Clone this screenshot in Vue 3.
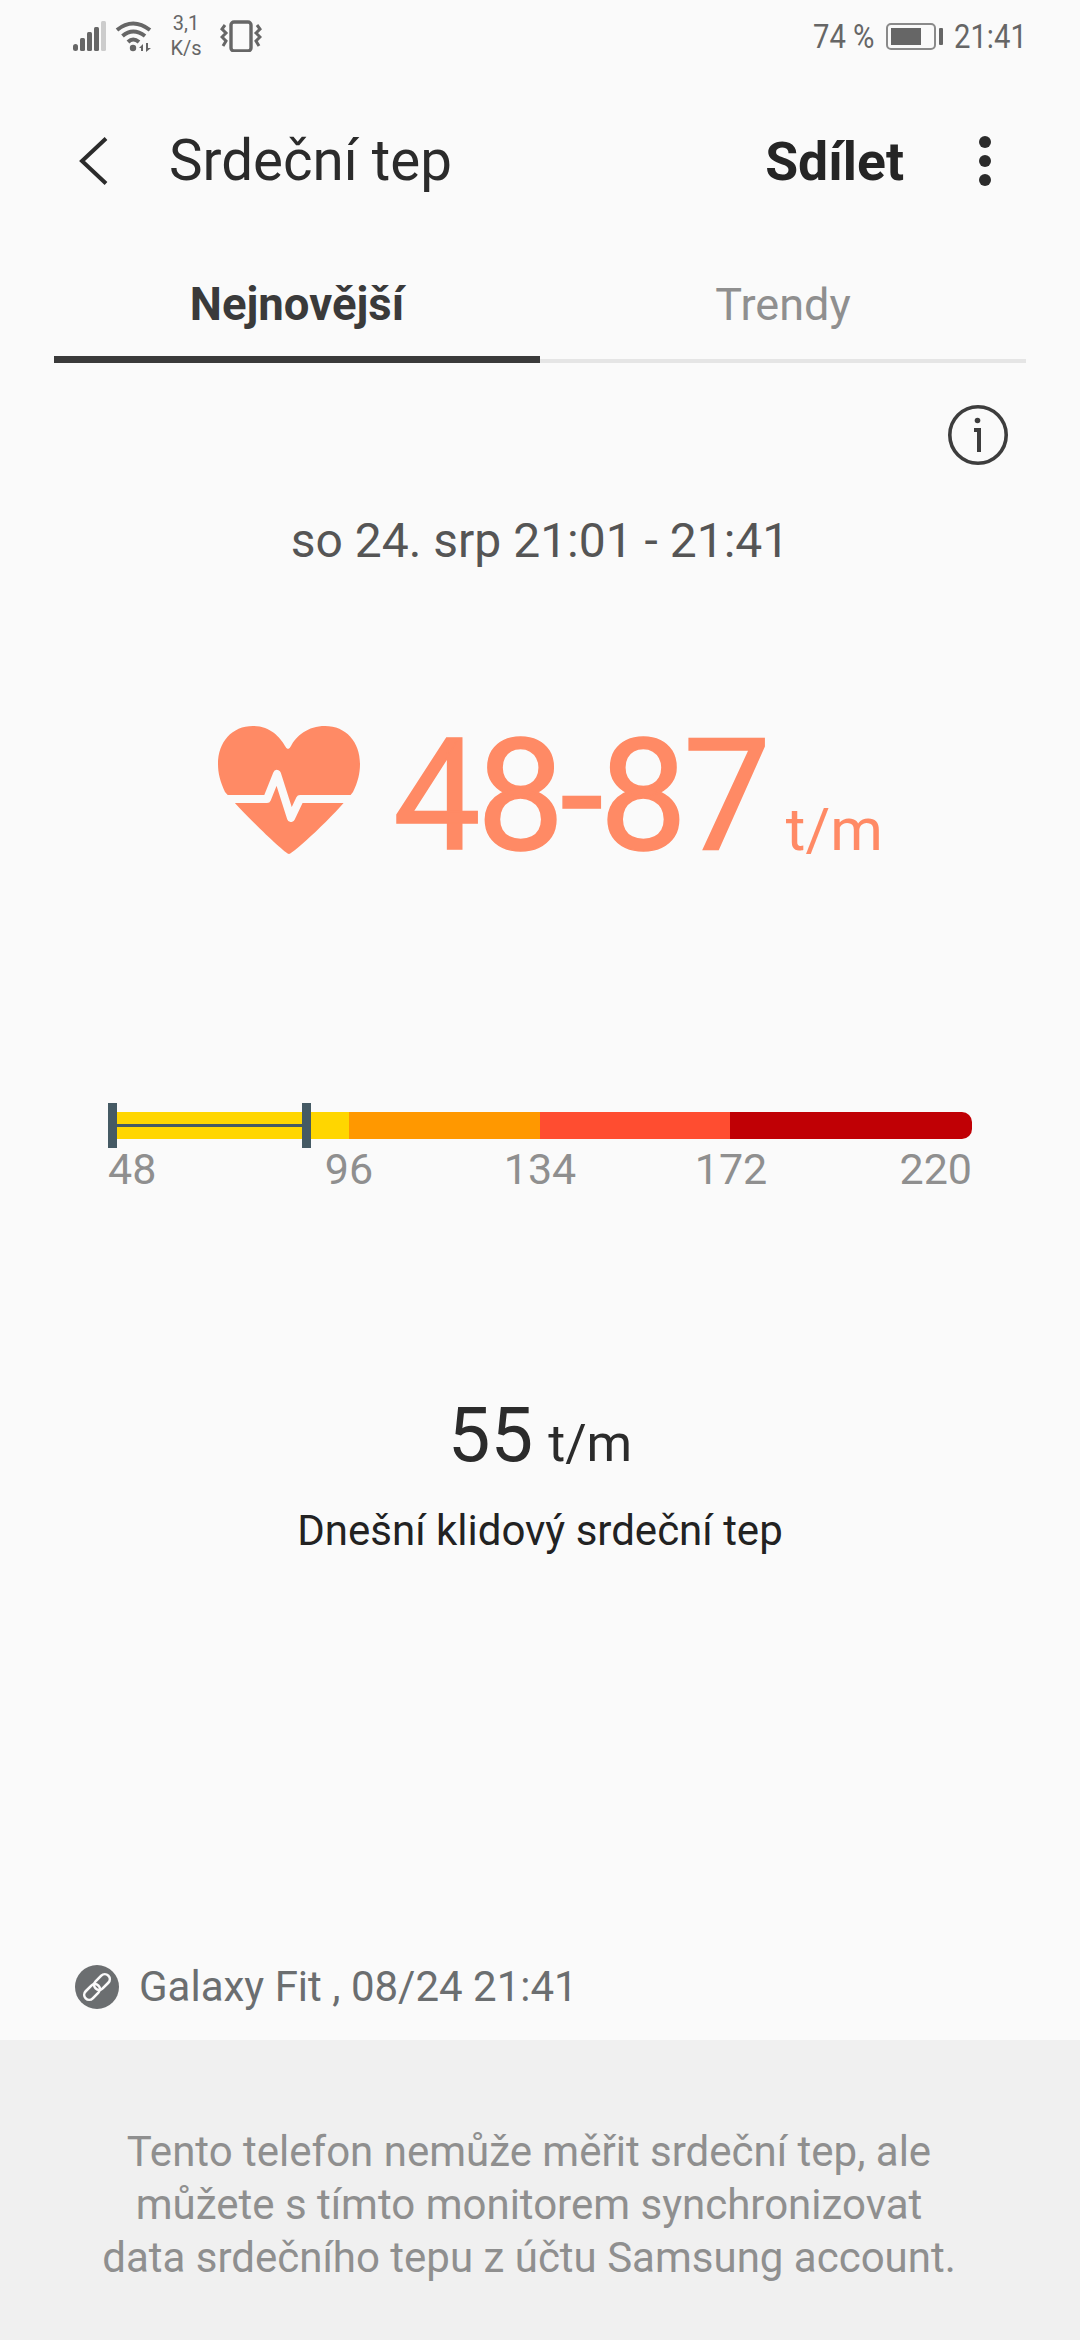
<template>
  <div class="screen">
    <div class="status-bar">
      <div class="status-left">
        <svg class="signal" width="34" height="32" viewBox="0 0 34 32">
          <rect x="0" y="24" width="5" height="7" rx="2.5" fill="#666" />
          <rect x="7" y="18" width="5" height="13" rx="1.5" fill="#666" />
          <rect x="14" y="12" width="5" height="19" rx="1.5" fill="#666" />
          <rect x="21" y="7" width="5" height="24" rx="1.5" fill="#666" />
          <rect x="28" y="1" width="5" height="30" rx="1.5" fill="#ccc" />
        </svg>
        <svg class="wifi" width="38" height="32" viewBox="0 0 38 32">
          <path d="M2 10 Q18 -3 35 10" fill="none" stroke="#666" stroke-width="4" />
          <path d="M7.5 16 Q18 7 30 16" fill="none" stroke="#666" stroke-width="4" />
          <path d="M13 22 Q18 17 24 22" fill="none" stroke="#666" stroke-width="4" />
          <circle cx="18" cy="28" r="3.2" fill="#666" />
          <path d="M24 28 L28 24 V31 H26 V28 Z M31 23 H33 V28 H36 L31 32 Z" fill="#666" />
        </svg>
        <div class="speed"><span>3,1</span><span>K/s</span></div>
        <svg class="vibrate" width="42" height="32" viewBox="0 0 42 32">
          <rect x="11" y="2" width="20" height="29" rx="3" fill="none" stroke="#666" stroke-width="3.4" />
          <path d="M5 5 L2 9 L6 13 L2 17 L6 21 L3 26" fill="none" stroke="#666" stroke-width="3" />
          <path d="M37 5 L40 9 L36 13 L40 17 L36 21 L39 26" fill="none" stroke="#666" stroke-width="3" />
        </svg>
      </div>
      <div class="status-right">
        <span class="battery-pct">74 %</span>
        <div class="battery"><div class="battery-fill"></div></div>
        <div class="battery-nub"></div>
        <span class="clock">21:41</span>
      </div>
    </div>

    <div class="toolbar">
      <svg class="back" width="30" height="48" viewBox="0 0 30 48">
        <path d="M27 1.5 L3 24 L27 46.5" fill="none" stroke="#2b2b2b" stroke-width="4" />
      </svg>
      <h1 class="title">Srdeční tep</h1>
      <span class="share">Sdílet</span>
      <div class="dots"><i></i><i></i><i></i></div>
    </div>

    <div class="tabs">
      <div v-for="tab in tabs" :key="tab.label" class="tab" :class="{ active: tab.active }">{{ tab.label }}</div>
    </div>

    <div class="info-row">
      <svg width="60" height="60" viewBox="0 0 60 60">
        <circle cx="30" cy="30" r="28.2" fill="none" stroke="#3d3d3d" stroke-width="3.6" />
        <circle cx="29.5" cy="15.5" r="2.8" fill="#3d3d3d" />
        <path d="M26 25 H31 V47" fill="none" stroke="#3d3d3d" stroke-width="4" />
      </svg>
    </div>

    <div class="date">so 24. srp 21:01 - 21:41</div>

    <div class="reading">
      <svg class="heart" width="142" height="128" viewBox="0 0 142 128">
        <path d="M71 128 C66 127 26 88 7 66 C2 55 0 47 0 38 C0 16 14 0 35 0 C52 0 62 11 67 20 Q70 26 73 20 C78 10 90 0 107 0 C128 0 142 16 142 38 C142 47 140 56 135 66 C116 90 76 127 71 128Z" fill="#ff8a65" />
        <polyline points="0,73 49,73 59,48 73,92 82,73 142,73" fill="none" stroke="#fafafa" stroke-width="8" stroke-linejoin="round" />
      </svg>
      <span class="range">48-87</span>
      <span class="range-unit">t/m</span>
    </div>

    <div class="gauge">
      <div class="bar">
        <div v-for="seg in segments" :key="seg.color" :style="{ width: seg.width + 'px', background: seg.color }"></div>
      </div>
      <div class="marker">
        <i class="tick"></i>
        <i class="line"></i>
        <i class="tick"></i>
      </div>
      <div class="scale">
        <span v-for="n in scale" :key="n">{{ n }}</span>
      </div>
    </div>

    <div class="resting">
      <div class="resting-value"><b>55</b> <span>t/m</span></div>
      <div class="resting-label">Dnešní klidový srdeční tep</div>
    </div>

    <div class="source">
      <svg width="44" height="44" viewBox="0 0 44 44">
        <circle cx="22" cy="22" r="22" fill="#6b6e70" />
        <g fill="none" stroke="#fafafa" stroke-width="2.6" transform="rotate(-45 22 22)">
          <rect x="6" y="17" width="18" height="10" rx="5" />
          <rect x="20" y="17" width="18" height="10" rx="5" />
        </g>
      </svg>
      <span>Galaxy Fit , 08/24 21:41</span>
    </div>

    <div class="notice">
      <div>Tento telefon nemůže měřit srdeční tep, ale</div>
      <div>můžete s tímto monitorem synchronizovat</div>
      <div>data srdečního tepu z účtu Samsung account.</div>
    </div>
  </div>
</template>

<script setup>
const tabs = [
  { label: 'Nejnovější', active: true },
  { label: 'Trendy', active: false },
];

const segments = [
  { width: 241, color: '#ffd600' },
  { width: 191, color: '#ff9800' },
  { width: 190, color: '#ff4d30' },
  { width: 242, color: '#c00005' },
];

const scale = [48, 96, 134, 172, 220];
</script>

<style>
html,
body {
  margin: 0;
  background: #fafafa;
}
</style>

<style scoped>
.screen {
  width: 1080px;
  height: 2340px;
  background: #fafafa;
  font-family: Roboto, sans-serif;
  display: flex;
  flex-direction: column;
  overflow: hidden;
}

.status-bar {
  height: 72px;
  padding: 0 54px 0 73px;
  display: flex;
  justify-content: space-between;
  align-items: center;
  color: #666;
  box-sizing: border-box;
}

.status-left,
.status-right {
  display: flex;
  align-items: center;
}

.wifi {
  margin-left: 8px;
}

.speed {
  display: flex;
  flex-direction: column;
  align-items: center;
  width: 38px;
  margin-left: 14px;
  font-size: 20px;
  line-height: 25px;
}

.vibrate {
  margin-left: 15px;
}

.status-right {
  font-size: 34px;
}

/* the status bar font is narrower than Roboto */
.battery-pct,
.clock {
  display: inline-block;
  white-space: nowrap;
  transform: scaleX(0.86);
  transform-origin: left center;
}

.battery-pct {
  width: 61px;
}

.clock {
  width: 72px;
  margin-left: 11px;
}

.battery {
  width: 50px;
  height: 27px;
  margin-left: 12px;
  border: 2px solid #8a8a8a;
  border-radius: 5px;
  padding: 3px;
  box-sizing: border-box;
}

.battery-fill {
  width: 74%;
  height: 100%;
  background: #666;
}

.battery-nub {
  width: 4px;
  height: 17px;
  margin-left: 3px;
  background: #666;
  border-radius: 1px;
}

.toolbar {
  height: 178px;
  display: flex;
  align-items: center;
  padding: 0 89px 0 79px;
  box-sizing: border-box;
}

.title {
  margin: 0 0 0 60px;
  font-size: 56.5px;
  font-weight: 400;
  color: #2b2b2b;
  flex: 1;
}

.share {
  font-size: 53.5px;
  font-weight: 700;
  color: #252525;
}

.dots {
  margin-left: 75px;
  display: flex;
  flex-direction: column;
  gap: 7px;
}

.dots i {
  width: 12px;
  height: 12px;
  border-radius: 50%;
  background: #2b2b2b;
}

.tabs {
  margin: 0 54px;
  display: flex;
  height: 113px;
}

.tab {
  flex: 1;
  box-sizing: border-box;
  padding-top: 27px;
  text-align: center;
  font-size: 45px;
  line-height: 56px;
  color: #8f8f8f;
  border-bottom: 4px solid #e5e5e5;
}

.tab.active {
  font-size: 45.5px;
  font-weight: 700;
  color: #3a3a3a;
  border-bottom: 7px solid #3a3a3a;
}

.info-row {
  display: flex;
  justify-content: flex-end;
  padding: 42px 72px 0 0;
}

.info-row svg {
  display: block;
}

.date {
  margin-top: 50px;
  text-align: center;
  font-size: 48px;
  line-height: 52px;
  color: #555;
}

.reading {
  margin-top: 165px;
  margin-left: 218px;
  height: 128px;
  display: flex;
  align-items: flex-end;
}

.heart {
  flex: none;
  margin-bottom: 6px;
}

.range {
  margin-left: 33px;
  font-size: 156px;
  line-height: 128px;
  letter-spacing: -4px;
  -webkit-text-stroke: 1.5px #ff8a65;
  color: #ff8a65;
}

.range-unit {
  margin-left: 19px;
  font-size: 60px;
  line-height: 60px;
  color: #ff8a65;
}

.gauge {
  position: relative;
  margin: 252px 108px 0;
  width: 864px;
}

.bar {
  display: flex;
  height: 27px;
  border-radius: 0 10px 10px 0;
  overflow: hidden;
}

.marker {
  position: absolute;
  left: 0;
  top: -9px;
  width: 203px;
  height: 45px;
  display: flex;
  align-items: center;
}

.marker .tick {
  width: 9px;
  height: 45px;
  background: #455a64;
}

.marker .line {
  flex: 1;
  height: 3px;
  background: #455a64;
}

/* inner labels sit centred on the colour boundaries */
.scale {
  display: grid;
  grid-template-columns: 145.5px 191px 191px 191px 1fr;
  margin-top: 6px;
  font-size: 43px;
  line-height: 48px;
  color: #8f8f8f;
  text-align: center;
}

.scale span:first-child {
  text-align: left;
}

.scale span:last-child {
  text-align: right;
}

.resting {
  margin-top: 200px;
  text-align: center;
}

.resting-value {
  line-height: 84px;
  color: #2b2b2b;
}

.resting-value b {
  font-size: 76px;
  font-weight: 400;
}

.resting-value span {
  font-size: 52px;
  margin-left: 11px;
}

.resting-label {
  margin-top: 7px;
  font-size: 42px;
  line-height: 52px;
  color: #222;
}

.source {
  margin-top: auto;
  padding: 0 0 31px 75px;
  display: flex;
  align-items: center;
  gap: 20px;
  font-size: 42px;
  line-height: 44px;
  color: #6b6e70;
}

.notice {
  height: 300px;
  box-sizing: border-box;
  padding: 85px 22px 0 0;
  background: #f0f0f0;
  text-align: center;
  font-size: 42px;
  line-height: 53px;
  color: #8f8f8f;
}
</style>
